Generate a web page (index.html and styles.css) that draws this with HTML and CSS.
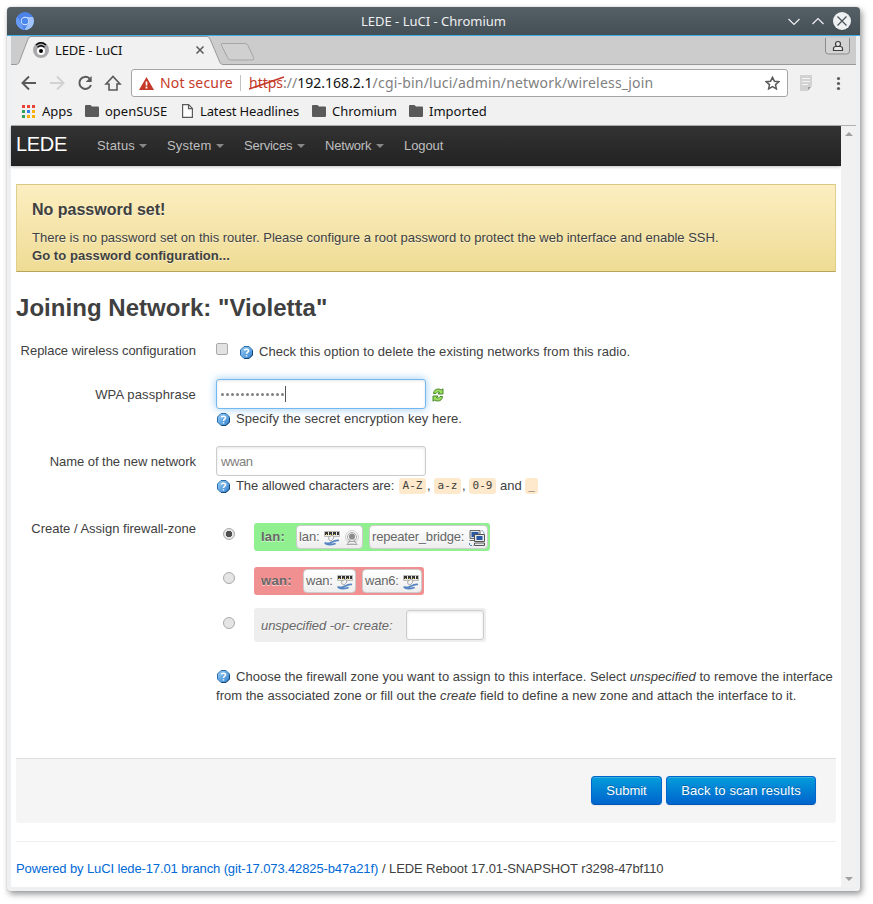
FILE: index.html
```
<!DOCTYPE html>
<html lang="en">
<head>
<meta charset="utf-8">
<title>LEDE - LuCI</title>
<link rel="stylesheet" href="styles.css">
</head>
<body>
<svg class="defs" width="0" height="0">
  <defs>
    <linearGradient id="blue" x1="0" y1="0" x2="1" y2="1"><stop offset="0" stop-color="#9bd0f6"/><stop offset="1" stop-color="#3080d0"/></linearGradient>
    <symbol id="help" viewBox="0 0 13 13">
      <path d="M4 .5h5L12.5 4v5L9 12.5H4L.5 9V4z" fill="url(#blue)" stroke="#2c6dac"/>
      <path d="M12.5 5v4L9 12.5H4.5" fill="none" stroke="#17466f"/>
      <path d="M4.3 4.5C4.7 2.7 8.6 2.6 8.6 4.8 8.6 6.2 6.5 6.2 6.5 8M6.5 9.2v1.3" fill="none" stroke="#fff" stroke-width="1.5"/>
    </symbol>
    <symbol id="folder" viewBox="0 0 14 12"><path d="M1 0h4.5L7 1.5h6q1 0 1 1V11q0 1-1 1H1q-1 0-1-1V1q0-1 1-1z" fill="#5a5a5a"/></symbol>
    <symbol id="ethernet" viewBox="0 0 16 16">
      <path d="M.5 1.500h15v5H.5z" fill="#e9e9e4" stroke="#bbb"/>
      <path d="M1 2h3v3H1zM5 2h3v3H5zM9 2h3v3H9zM13 2h2v3h-2z" fill="#333"/>
      <path d="M2 4h1v1H2zM6 4h1v1H6zM10 4h1v1h-1z" fill="#d4b72d"/>
      <path d="M4.500 7.500l4-2.500 1.500 3-3 3-2-1z" fill="#f4f4f4" stroke="#999" stroke-width=".8"/>
      <path d="M15 10.500c-3-.7-5 .5-8 2s-5 1-6.300.3c2 2.500 7 2 11 .7" fill="none" stroke="#5685c2" stroke-width="1.700"/>
    </symbol>
    <symbol id="wifi" viewBox="0 0 16 16">
      <g fill="none" stroke="#d2d2d2"><circle cx="8" cy="7" r="6.500"/><circle cx="8" cy="7" r="4.500" stroke="#aaa"/></g>
      <circle cx="8" cy="6.500" r="3" fill="#8b8b8b"/><path d="M6.500 9L3.500 14M9.500 9L12.500 14M2.500 14.500h11M5 11.500h6" fill="none" stroke="#aaa" stroke-width="1.100"/>
    </symbol>
    <symbol id="bridge" viewBox="0 0 16 16">
      <path d="M1 .5h10v8H1zM.5 10.500h7" fill="#dde3e8" stroke="#666"/><path d="M2.500 2h7v5h-7z" fill="#2a57a4"/>
      <path d="M5.500 4.500h10v7h-10zM5.500 13h10v2.500h-10z" fill="#e6eaed" stroke="#555"/><path d="M7.500 6h6v4h-6z" fill="#2a57a4"/>
      <path d="M12.500 .7q2.500 0 2.500 3M.5 13v2.500h4" fill="none" stroke="#5685c2" stroke-dasharray="2 1"/>
    </symbol>
  </defs>
</svg>

<div class="window">
  <header class="titlebar">
    <svg class="app-icon" viewBox="0 0 18 18"><circle cx="9" cy="9" r="9" fill="#4c83ea"/><path d="M9 5h8a9 9 0 0 1-8.500 13l4-7z" fill="#a0c3fb"/><path d="M1.200 4.500l4 6.500 3.300 7A9 9 0 0 1 1.200 4.500z" fill="#679af4"/><circle cx="9" cy="9" r="4.200" fill="#dce9ff"/><circle cx="9" cy="9" r="3.300" fill="#4a87ee"/></svg>
    <span class="window-title">LEDE - LuCI - Chromium</span>
    <svg class="controls" viewBox="0 0 66 20" fill="none" stroke="#eff0f1" stroke-width="1.200"><path d="M2.500 8l5.500 5.500L13.500 8M26.500 13L32 7.500l5.500 5.500"/><circle cx="56" cy="10" r="9" fill="#eff0f1" stroke="none"/><path d="M51.500 5.500l9 9M60.500 5.500l-9 9" stroke="#475057"/></svg>
  </header>

  <div class="frame">
    <div class="tabstrip">
      <svg class="tab-shapes" viewBox="0 0 845 29">
        <path d="M0 28.500h5q2 0 3-2L17 3q1-2.500 3-2.500h176q2 0 3 2.500l10 23.500q1 2 3 2h634v1H0z" fill="#f1f1f1"/>
        <path d="M0 28.500h5q2 0 3-2L17 3q1-2.500 3-2.500h176q2 0 3 2.500l10 23.500q1 2 3 2h634" fill="none" stroke="#999"/>
        <path d="M211 7.500h23q2 0 3 2l5.500 12q1 2.500-1 2.500h-22q-2 0-3-2.500l-6-12q-1-2 .5-2z" fill="#d0d0d0" stroke="#a5a5a5"/>
        <path d="M814.500 2v13q0 3 3 3h18q3 0 3-3V2" fill="#d2d2d2" stroke="#8b8b8b"/>
        <circle cx="827" cy="8" r="2.500" fill="#e8e8e8" stroke="#3c3c3c" stroke-width="1.200"/>
        <path d="M822.500 14.500v-2q0-2 2.500-2h4q2.500 0 2.500 2v2z" fill="#e8e8e8" stroke="#3c3c3c" stroke-width="1.200"/>
      </svg>
      <div class="tab">
        <svg class="favicon" viewBox="0 0 16 16"><circle cx="8" cy="8" r="8" fill="#aaa9ad"/><circle cx="8" cy="9" r="4" fill="#fff"/><circle cx="8" cy="9" r="2" fill="#000"/><path d="M3 3q5-4.500 10 0M4.500 5.300q3.500-3 7 0" fill="none" stroke="#000" stroke-width="1.400"/></svg>
        <span class="tab-title">LEDE - LuCI</span>
        <svg class="tab-close" viewBox="0 0 8 8"><path d="M.5.5l7 7M7.500.5l-7 7" stroke="#5a5a5a" stroke-width="1.500"/></svg>
      </div>
    </div>

    <div class="toolbar">
      <svg class="nav-icons" viewBox="0 0 120 28" fill="none" stroke="#5a5a5a" stroke-width="2"><path d="M25 14H12M18 7.500L11.500 14l6.500 6.500"/><path d="M39 14h13M46 7.500l6.500 6.500-6.500 6.500" stroke="#d2d2d2"/><path d="M78.500 9.500A6 6 0 1 0 80 16"/><path d="M80.700 7v6h-6z" fill="#5a5a5a" stroke="none"/><path d="M95 15h3v6h8v-6h3l-7-7.500z" stroke-width="1.600"/></svg>
      <div class="omnibox">
        <svg class="warn" viewBox="0 0 15 13"><path d="M7.500 0L15 13H0z" fill="#c53929"/><path d="M7.500 4.500v4M7.500 9.500v2" stroke="#fff" stroke-width="1.700"/></svg>
        <span class="not-secure">Not secure</span>
        <span class="divider"></span>
        <span class="url"><span class="scheme">https<svg viewBox="0 0 36 14"><path d="M0 13L35 1" stroke="#c53929" stroke-width="1.600"/></svg></span>://<span class="host">192.168.2.1</span><span class="path">/cgi-bin/luci/admin/network/wireless_join</span></span>
        <svg class="star" viewBox="0 0 15 14"><path d="M7.500 1.300L9.400 5.200l4.400.5-3.300 2.900.9 4.300-3.900-2.200-3.900 2.200.9-4.300-3.300-2.900 4.400-.5z" fill="none" stroke="#5a5a5a" stroke-width="1.500"/></svg>
      </div>
      <svg class="tool-icons" viewBox="0 0 64 28"><path d="M12 6h12v11l-4 5h-8z" fill="#d2d2d2"/><path d="M14 9.500h8M14 12.500h8M14 15.500h6" stroke="#f4f4f4"/><path d="M20 21v-3h3z" fill="#999"/><g fill="#5a5a5a"><circle cx="50.500" cy="9.500" r="1.600"/><circle cx="50.500" cy="14.500" r="1.600"/><circle cx="50.500" cy="19.500" r="1.600"/></g></svg>
    </div>

    <nav class="bookmarks">
      <svg class="apps" viewBox="0 0 13 13"><path d="M0 0h3v3H0zM5 0h3v3H5zM10 0h3v3h-3z" fill="#ea4335"/><path d="M0 5h3v3H0zM0 10h3v3H0z" fill="#34a15a"/><path d="M5 5h3v3H5z" fill="#2f82ef"/><path d="M10 5h3v3h-3zM5 10h3v3H5zM10 10h3v3h-3z" fill="#f9b002"/></svg>
      <span class="bm bm-apps">Apps</span>
      <svg class="folder"><use href="#folder"/></svg><span class="bm bm-suse">openSUSE</span>
      <svg class="doc" viewBox="0 0 11 14"><path d="M.6.6h6L10.400 4.400v9H.6zM6.500.6v4h4" fill="#fff" stroke="#5a5a5a" stroke-width="1.200"/></svg><span class="bm bm-news">Latest Headlines</span>
      <svg class="folder"><use href="#folder"/></svg><span class="bm bm-chrom">Chromium</span>
      <svg class="folder"><use href="#folder"/></svg><span class="bm">Imported</span>
    </nav>

    <div class="viewport">
      <div class="page">
        <nav class="navbar">
          <span class="brand">LEDE</span>
          <span class="menu m1">Status</span><span class="menu m2">System</span><span class="menu m3">Services</span><span class="menu m4">Network</span><span class="menu plain">Logout</span>
        </nav>
        <main class="content">
          <section class="alert">
            <h4>No password set!</h4>
            <p class="alert-text">There is no password set on this router. Please configure a root password to protect the web interface and enable SSH.</p>
            <p class="alert-link">Go to password configuration...</p>
          </section>
          <h2>Joining Network: "Violetta"</h2>

          <div class="row r1"><label class="l1">Replace wireless configuration</label>
            <div class="field check-line"><span class="checkbox"></span><svg class="help"><use href="#help"/></svg><span class="t1">Check this option to delete the existing networks from this radio.</span></div></div>
          <div class="row r2"><label class="l2">WPA passphrase</label>
            <div class="field"><div class="line"><div class="input focused"><span class="dots"><i></i><i></i><i></i><i></i><i></i><i></i><i></i><i></i><i></i><i></i><i></i><i></i><i></i></span><span class="caret"></span></div>
              <svg class="reload" viewBox="0 0 12 14"><g fill="#9ede62" stroke="#397e1e" stroke-width=".9"><path d="M1.500 5.500Q2 1 6.500 1q1.700 0 2.700 1L11 .8V6H6l1.700-1.700Q5 3 4 5.500z"/><path d="M10.500 8.500Q10 13 5.500 13q-1.700 0-2.700-1L1 13.200V8h5L4.300 9.700Q7 11 8 8.500z"/></g></svg></div>
              <div class="hint"><svg class="help"><use href="#help"/></svg><span class="t2">Specify the secret encryption key here.</span></div></div></div>
          <div class="row r3"><label class="l3">Name of the new network</label>
            <div class="field"><div class="input"><span class="wwan">wwan</span></div>
              <div class="hint"><svg class="help"><use href="#help"/></svg><span class="t3">The allowed characters are:</span><code>A-Z</code><span class="comma">,</span><code>a-z</code><span class="comma">,</span><code>0-9</code><span class="and">and</span><code class="under">_</code></div></div></div>
          <div class="row r4"><label class="l4">Create / Assign firewall-zone</label>
            <div class="field zones">
              <div class="zone-row"><span class="radio on"></span><div class="zone lan"><b class="zl">lan:</b><span class="iface i1"><span>lan:</span><svg><use href="#ethernet"/></svg><svg><use href="#wifi"/></svg></span><span class="iface i2"><span>repeater_bridge:</span><svg><use href="#bridge"/></svg></span></div></div>
              <div class="zone-row"><span class="radio"></span><div class="zone wan"><b class="zw">wan:</b><span class="iface i3"><span>wan:</span><svg><use href="#ethernet"/></svg></span><span class="iface i4"><span>wan6:</span><svg><use href="#ethernet"/></svg></span></div></div>
              <div class="zone-row"><span class="radio low"></span><div class="zone none"><em class="create">unspecified -or- create:</em><div class="input small"></div></div></div>
              <div class="zone-help"><div class="help-line"><svg class="help"><use href="#help"/></svg><span class="t4">Choose the firewall zone you want to assign to this interface. Select <em>unspecified</em> to remove the interface</span></div><div class="help-line"><span class="t5">from the associated zone or fill out the <em>create</em> field to define a new zone and attach the interface to it.</span></div></div>
            </div></div>
          <div class="actions"><span class="btn b1">Submit</span><span class="btn b2">Back to scan results</span></div>
          <footer><span class="powered">Powered by LuCI lede-17.01 branch (git-17.073.42825-b47a21f)</span><span class="version">/ LEDE Reboot 17.01-SNAPSHOT r3298-47bf110</span></footer>
        </main>
      </div>
      <div class="scrollbar"><span class="up"></span><span class="down"></span></div>
    </div>
  </div>
</div>
</body>
</html>
```
FILE: styles.css
```
* { box-sizing: border-box; }
body { margin: 0; padding: 7px; width: 873px; height: 904px; overflow: hidden; background: #fff; font: 13px/18px "Liberation Sans", Arial, sans-serif; color: #404040; white-space: nowrap; }
h2, h4, p { margin: 0; }
svg { display: block; flex: none; }
.defs { position: absolute; }

.window { width: 853px; height: 884px; border-radius: 4px 4px 3px 3px; background: #eff0f1; box-shadow: 0 0 1px 0 #999, 2px 3px 6px 0 rgba(0,0,0,.42); font-family: "Noto Sans", sans-serif; }
.titlebar { height: 29px; border-bottom: 1px solid #3daee9; border-radius: 4px 4px 0 0; background: linear-gradient(#566067, #444e55); display: flex; align-items: center; justify-content: space-between; padding: 0 8px 0 9px; color: #eff0f1; }
.app-icon { width: 18px; height: 18px; }
.controls { width: 66px; height: 20px; margin-left: -48px; }
.window-title { font-size: 13px; margin-left: -1px; }
.frame { margin: 0 4px; height: 851px; display: flex; flex-direction: column; background: #f1f1f1; }

.tabstrip { height: 29px; background: #ccc; position: relative; }
.tab-shapes { position: absolute; left: 0; top: 0; width: 845px; height: 29px; }
.tab { position: relative; height: 29px; padding: 0 0 1px 22px; display: flex; align-items: center; color: #111; }
.favicon { width: 16px; height: 16px; margin-right: 6px; }
.tab-title { width: 141px; letter-spacing: -.17px; }
.tab-close { width: 8px; height: 8px; }

.toolbar { height: 36px; display: flex; padding-top: 4px; }
.nav-icons { width: 120px; height: 28px; }
.omnibox { width: 657px; height: 28px; background: #fff; border: 1px solid #a6a6a6; border-radius: 3px; display: flex; align-items: center; padding-left: 7px; font-size: 14px; }
.warn { width: 15px; height: 13px; }
.not-secure { width: 80px; margin-left: 6px; color: #c53929; letter-spacing: .17px; }
.divider { width: 1px; height: 16px; background: #c2c2c2; margin-right: 8px; }
.url { width: 515px; color: #808080; }
.path { letter-spacing: .2px; }
.scheme { color: #c53929; position: relative; }
.scheme svg { position: absolute; left: 0; top: 3px; width: 36px; height: 14px; }
.host { color: #111; }
.star { width: 15px; height: 14px; margin-left: 1px; }
.tool-icons { width: 64px; height: 28px; }

.bookmarks { height: 25px; border-bottom: 1px solid #b0b0b0; display: flex; align-items: center; padding: 0 0 4px 11px; color: #111; }
.apps { width: 13px; height: 13px; margin-right: 7px; }
.folder { width: 14px; height: 12px; margin-right: 6px; }
.doc { width: 11px; height: 14px; margin-right: 7px; }
.bm-apps { width: 43px; }
.bm-suse { width: 77px; }
.bm-news { width: 112px; letter-spacing: -.12px; }
.bm-chrom { width: 77px; }

.viewport { height: 761px; display: flex; font-family: "Liberation Sans", Arial, sans-serif; }
.page { width: 830px; background: #fff; }
.scrollbar { width: 15px; background: #f1f1f1; display: flex; flex-direction: column; justify-content: space-between; align-items: center; padding: 6px 0 6px; }
.up, .down { border: 4px solid transparent; border-top: 0; border-bottom-color: #a0a0a0; }
.down { border-bottom: 0; border-top: 4px solid #a0a0a0; }
.navbar { height: 40px; display: flex; align-items: center; padding-left: 5px; background: linear-gradient(#333, #222); box-shadow: 0 1px 3px rgba(0,0,0,.25), inset 0 -1px 0 rgba(0,0,0,.1); color: #bfbfbf; }
.brand { width: 81px; color: #fff; font-size: 20px; margin-top: -5px; letter-spacing: -.3px; }
.menu { display: flex; justify-content: space-between; align-items: center; margin-right: 20px; letter-spacing: .2px; }
.menu::after { content: ""; border: 4px solid transparent; border-top-color: #888; border-bottom: 0; }
.menu.plain { letter-spacing: -.1px; }
.menu.plain::after { content: none; }
.m1 { width: 50px; } .m2 { width: 57px; } .m3 { width: 61px; letter-spacing: -.2px; } .m4 { width: 59px; letter-spacing: -.2px; }

.content { padding: 18px 5px 0; }
.alert { height: 88px; padding: 16px 15px 0; background: linear-gradient(#fceec1, #eedc94); border: 1px solid; border-color: #d8c881 #dfcf8c #b9a55b #dfcf8c; text-shadow: 0 1px 0 rgba(255,255,255,.5); }
h4 { font-size: 16px; line-height: 18px; margin-bottom: 10px; }
.alert-link { font-weight: bold; letter-spacing: .07px; }
h2 { font-size: 24px; line-height: 36px; margin-top: 18px; letter-spacing: .04px; }

.row { display: flex; }
.row > label { width: 180px; margin-right: 20px; text-align: right; }
.r1 { height: 53px; padding-top: 16px; }
.r2 { height: 67px; }
.r3 { height: 67px; }
.r4 { height: 245px; }
.r2 > label, .r3 > label, .r4 > label { padding-top: 7px; }
.l1 { letter-spacing: -.03px; }
.l2 { letter-spacing: .15px; }
.l3 { letter-spacing: -.05px; }
.check-line { display: flex; align-items: center; height: 20px; }
.checkbox { width: 12px; height: 12px; margin: -6px 12px 0 0; border: 1px solid #aaa; border-radius: 2px; background: #e2e2e2; }
.help { width: 13px; height: 13px; margin-right: 6px; }
.line { display: flex; align-items: center; }
.input { width: 210px; height: 30px; padding: 0 4px; border: 1px solid #ccc; border-radius: 3px; background: #fff; box-shadow: inset 0 1px 3px rgba(0,0,0,.1); display: flex; align-items: center; color: #808080; }
.focused { border-color: #73b9ef; box-shadow: inset 0 1px 3px rgba(0,0,0,.1), 0 0 8px rgba(82,168,236,.6); }
.dots { display: flex; gap: 2px; }
.dots i { width: 3px; height: 3px; border-radius: 50%; background: #808080; }
.caret { width: 1px; height: 16px; margin-left: 1px; background: #555; }
.reload { width: 12px; height: 14px; margin: 2px 0 0 6px; }
.wwan { padding-top: 2px; letter-spacing: -.4px; }
.hint { display: flex; align-items: center; height: 20px; padding-left: 1px; }
code { font: 11px/16px "DejaVu Sans Mono", monospace; background: #fee9cc; color: #404040; border-radius: 3px; padding: 0 3px; width: 27px; height: 16px; text-align: center; }
.comma { width: 8px; padding-left: 1px; }
.and { width: 29px; padding-left: 4px; }
code.under { width: 13px; }
.t1, .t2 { letter-spacing: .05px; }
.t3 { width: 163px; letter-spacing: -.08px; }
.t4, .t5 { letter-spacing: .02px; }

.zones { padding-top: 10px; }
.zone-row { display: flex; align-items: center; margin-bottom: 16px; }
.zone-row + .zone-row + .zone-row { margin-top: -3px; }
.radio { width: 12px; height: 12px; margin: -6px 19px 0 7px; border: 1px solid #aaa; border-radius: 50%; background: #e5e5e5; }
.radio.on { background: radial-gradient(#505050 0 3px, #e5e5e5 3.500px); }
.radio.low { margin-top: -4px; }
.zone { height: 28px; border-radius: 3px; display: flex; align-items: center; padding-left: 7px; color: #666; text-shadow: 0 1px 0 rgba(255,255,255,.6); }
.lan { width: 236px; background: #90f090; }
.wan { width: 170px; background: #f09090; }
.none { width: 232px; height: 34px; background: #eee; }
.zl { width: 35px; letter-spacing: .2px; } .zw { width: 42px; letter-spacing: .3px; }
.iface { flex: none; height: 24px; display: flex; justify-content: space-between; align-items: center; padding: 0 2px; border: 1px solid #ccc; border-radius: 4px; background: linear-gradient(#fff, #eee); margin-right: 6px; }
.iface:last-child { margin-right: 0; }
.iface svg { width: 16px; height: 16px; margin-top: 1px; }
.i1 { width: 67px; letter-spacing: -.1px; } .i2 { width: 119px; letter-spacing: -.2px; } .i3 { width: 53px; letter-spacing: -.2px; } .i4 { width: 60px; letter-spacing: -.2px; }
.create { width: 145px; padding-top: 1px; letter-spacing: -.05px; }
.small { width: 78px; }
.zone-help { margin-top: 25px; }
.help-line { height: 19px; display: flex; align-items: center; }
.help-line .help { margin-left: 1px; }

.actions { height: 65px; padding: 17px 20px 0; border-top: 1px solid #ddd; border-radius: 0 0 3px 3px; background: #f5f5f5; display: flex; align-items: flex-start; justify-content: flex-end; gap: 4px; }
.btn { height: 29px; border: 1px solid; border-color: #0064cd #0064cd #0055b4; border-radius: 4px; background: linear-gradient(#049cdb, #0064cd); box-shadow: inset 0 1px 0 rgba(255,255,255,.2), 0 1px 2px rgba(0,0,0,.05); color: #fff; text-shadow: 0 -1px 0 rgba(0,0,0,.25); line-height: 27px; text-align: center; }
.b1 { width: 71px; } .b2 { width: 150px; letter-spacing: .17px; }
footer { margin-top: 18px; border-top: 1px solid #eee; padding-top: 18px; display: flex; }
.powered { width: 366px; color: #0069d6; letter-spacing: -.12px; }
.version { letter-spacing: -.1px; }
```
